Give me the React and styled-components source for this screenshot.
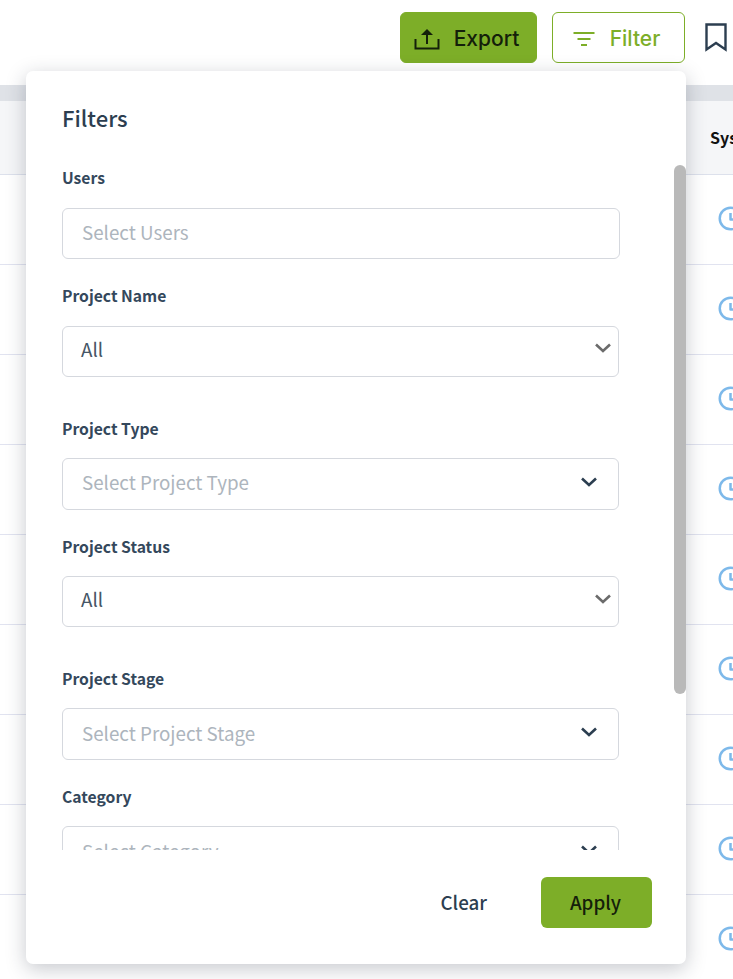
import React from 'react';
import styled, { createGlobalStyle } from 'styled-components';

const GlobalStyle = createGlobalStyle`
  html, body {
    margin: 0;
    padding: 0;
    background: #fff;
    overflow: hidden;
  }
  body {
    font-family: "Noto Sans CJK SC", "Noto Sans", sans-serif;
  }
`;

const Page = styled.div`
  position: relative;
  width: 733px;
  height: 979px;
  overflow: hidden;
  background: #fff;
`;

const Toolbar = styled.div`
  display: flex;
  justify-content: flex-end;
  align-items: flex-start;
  gap: 15px;
  height: 85px;
  padding: 12px 6px 0 0;
  box-sizing: border-box;
`;

const ToolButton = styled.button`
  display: flex;
  align-items: center;
  justify-content: center;
  gap: ${(p) => p.$gap}px;
  width: ${(p) => p.$width}px;
  height: 51px;
  padding: 2px 4px 0 0;
  box-sizing: border-box;
  border-radius: 6px;
  border: 1px solid #7dae28;
  background: ${(p) => (p.$filled ? '#7dae28' : '#fff')};
  color: ${(p) => (p.$filled ? '#14200a' : '#7dae28')};
  font-family: "Inter", sans-serif;
  font-size: 21px;
  font-weight: 500;
`;

const BookmarkButton = styled.div`
  display: flex;
  align-items: center;
  height: 51px;
  margin-left: 5px;
`;

const Band = styled.div`
  height: 16px;
  background: #dfe2e7;
`;

const HeadRow = styled.div`
  display: flex;
  align-items: center;
  height: 74px;
  padding: 0 0 2px 710px;
  box-sizing: border-box;
  background: #f5f6f8;
  border-bottom: 1px solid #dde1ec;
  color: #111;
  font-size: 16px;
  font-weight: 700;
  white-space: nowrap;
`;

const Row = styled.div`
  display: flex;
  align-items: center;
  height: 90px;
  padding: 0 0 3px 718px;
  box-sizing: border-box;
  border-bottom: 1px solid #e1e3f0;

  svg {
    flex: none;
  }
`;

const Panel = styled.div`
  position: absolute;
  top: 71px;
  left: 26px;
  width: 660px;
  height: 893px;
  display: flex;
  flex-direction: column;
  background: #fff;
  border-radius: 7px;
  box-shadow: 0 5px 20px rgba(30, 40, 60, 0.25);
`;

const ScrollArea = styled.div`
  height: 779px;
  padding: 30px 66px 0 36px;
  box-sizing: border-box;
  overflow: hidden;
`;

const Thumb = styled.div`
  position: absolute;
  top: 94px;
  right: 0;
  width: 12px;
  height: 529px;
  border-radius: 6px;
  background: #b9b9b9;
`;

const Title = styled.h2`
  margin: 0 0 35.1px;
  color: #2c3e50;
  font-size: 22px;
  line-height: 32px;
  font-weight: 500;
`;

const Field = styled.div`
  display: flow-root;
  margin-bottom: ${(p) => p.$gap}px;
`;

const Label = styled.label`
  display: block;
  margin-top: 0.2px;
  margin-bottom: 19.3px;
  color: #34485c;
  font-size: 15.7px;
  line-height: 20px;
  font-weight: 700;
`;

const Control = styled.div`
  display: flex;
  align-items: center;
  justify-content: space-between;
  width: ${(p) => (p.$wide ? 558 : 557)}px;
  height: ${(p) => (p.$custom ? 52 : 51)}px;
  padding: 0 ${(p) => (p.$native ? 7 : 21)}px ${(p) => (p.$native ? 6 : 4)}px ${(p) => (p.$native ? 18 : 19)}px;
  box-sizing: border-box;
  border: 1px solid #d5d8de;
  border-radius: 6px;
  background: #fff;
  color: ${(p) => (p.$native ? '#465666' : '#adb5bd')};
  font-size: 18.8px;
`;

const Footer = styled.div`
  display: flex;
  justify-content: flex-end;
  align-items: center;
  gap: 54px;
  height: 51px;
  margin-top: 27px;
  padding-right: 34px;
  box-sizing: border-box;
`;

const ClearButton = styled.button`
  padding: 0 0 2px;
  border: none;
  background: transparent;
  color: #2c3e50;
  font-family: inherit;
  font-size: 18.8px;
  font-weight: 500;
`;

const ApplyButton = styled.button`
  width: 111px;
  height: 51px;
  padding: 0 2px 2px 0;
  border: none;
  border-radius: 6px;
  background: #7dae28;
  color: #14200a;
  font-family: inherit;
  font-size: 18.8px;
  font-weight: 500;
`;

const ClockIcon = () => (
  <svg width="25" height="25" viewBox="0 0 25 25" fill="none" stroke="#7db9ea" strokeWidth="2.5">
    <circle cx="12.5" cy="12.5" r="10.75" />
    <path d="M12.5 7v6.5h5" strokeLinejoin="round" />
  </svg>
);

const Chevron = ({ native }) => (
  <svg width="16" height="10" viewBox="0 0 16 10" fill="none" stroke={native ? '#6b6b6b' : '#2c3e50'} strokeWidth="2.6">
    <path d="M1 1.5l7 6.5 7-6.5" />
  </svg>
);

const fields = [
  { label: 'Project Name', text: 'All', native: true, gap: 41.8 },
  { label: 'Project Type', text: 'Select Project Type', gap: 26.6 },
  { label: 'Project Status', text: 'All', native: true, gap: 41.8 },
  { label: 'Project Stage', text: 'Select Project Stage', gap: 26.7 },
  { label: 'Category', text: 'Select Category', gap: 26.6 },
];

const App = () => {
  return (
    <Page>
      <GlobalStyle />
      <Toolbar>
        <ToolButton $filled $width={137} $gap={14}>
          <svg width="26" height="22" viewBox="0 0 26 22" fill="none" stroke="#14200a" strokeWidth="2">
            <path d="M1.5 11v9.5h23V11" />
            <path d="M13 6v10" />
            <path d="M13 1L19 7H7z" fill="#14200a" stroke="none" />
          </svg>
          Export
        </ToolButton>
        <ToolButton $width={133} $gap={15}>
          <svg width="22" height="14" viewBox="0 0 22 14" fill="none" stroke="#7dae28" strokeWidth="2">
            <path d="M0.5 1h21M4.5 7h13M8 13h6" />
          </svg>
          Filter
        </ToolButton>
        <BookmarkButton>
          <svg width="22" height="29" viewBox="0 0 22 29" fill="none" stroke="#2c3e50" strokeWidth="2.4">
            <path d="M1.5 1.5h19v25L11 20l-9.5 6.5z" />
          </svg>
        </BookmarkButton>
      </Toolbar>
      <Band />
      <HeadRow>Sys</HeadRow>
      {Array.from({ length: 9 }).map((_, i) => (
        <Row key={i}>
          <ClockIcon />
        </Row>
      ))}
      <Panel>
        <ScrollArea>
          <Title>Filters</Title>
          <Field $gap={27.6}>
            <Label>Users</Label>
            <Control $wide>Select Users</Control>
          </Field>
          {fields.map((f) => (
            <Field key={f.label} $gap={f.gap}>
              <Label>{f.label}</Label>
              <Control $native={f.native} $custom={!f.native}>
                {f.text}
                <Chevron native={f.native} />
              </Control>
            </Field>
          ))}
        </ScrollArea>
        <Thumb />
        <Footer>
          <ClearButton>Clear</ClearButton>
          <ApplyButton>Apply</ApplyButton>
        </Footer>
      </Panel>
    </Page>
  );
};

export default App;
